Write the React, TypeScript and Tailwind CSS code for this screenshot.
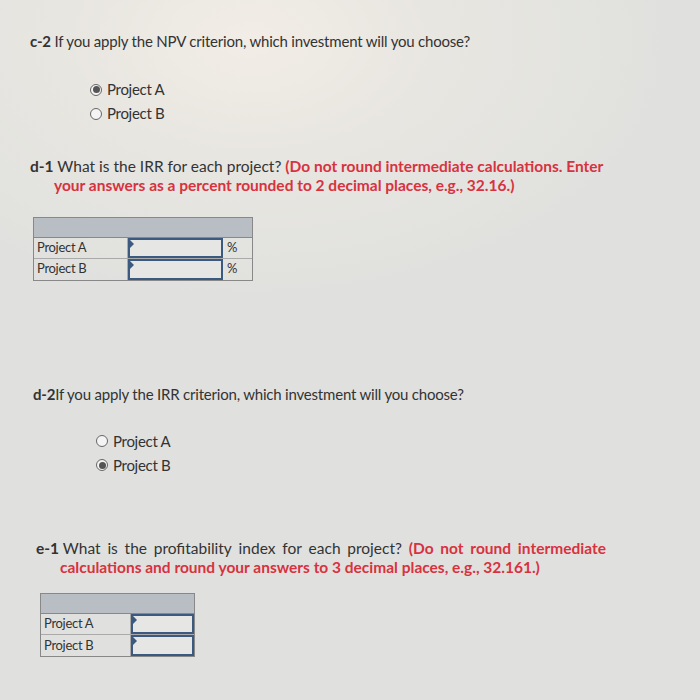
import React from "react";

function Radio({ checked, label }: { checked: boolean; label: string }) {
  return (
    <div className="flex items-center gap-[5px] h-[24px]">
      <span className="w-[12px] h-[12px] rounded-full border border-[#666] bg-[#f4f4f4] flex items-center justify-center">
        {checked && <span className="w-[7px] h-[7px] rounded-full bg-[#555]" />}
      </span>
      <span className="text-[15px] text-[#333] tracking-[-0.3px]">{label}</span>
    </div>
  );
}

function InputCell({ w }: { w: string }) {
  return (
    <div className={`relative ${w} h-full border-2 border-[#3c5a80] bg-[#e6e7e5]`}>
      <span className="absolute left-0 top-0 w-0 h-0 border-t-[4px] border-b-[4px] border-l-[4px] border-t-transparent border-b-transparent border-l-[#3c5a80]" />
    </div>
  );
}

export default function App() {
  return (
    <div
      className="w-[700px] h-[700px] overflow-hidden text-[#333] bg-[#e0e1de]"
      style={{
        fontFamily: "Lato, 'Open Sans', sans-serif",
        backgroundImage:
          "radial-gradient(ellipse 420px 260px at 250px 40px, #f2ede6 0%, #e8e6e1 45%, rgba(224,225,222,0) 100%)",
      }}
    >
      <div className="pt-[30px] pl-[30px]">
        <p className="text-[15px] tracking-[-0.2px]">
          <span className="font-bold">c-2</span> If you apply the NPV criterion, which investment will you choose?
        </p>
        <div className="pl-[60px] pt-[25px]">
          <Radio checked label="Project A" />
          <Radio checked={false} label="Project B" />
        </div>

        <div className="pt-[31px] text-[15.5px] leading-[19px] w-[640px]">
          <p>
            <span className="font-bold">d-1</span> What is the IRR for each project?{" "}
            <span className="text-[#d8323f] font-bold">
              (Do not round intermediate calculations. Enter
            </span>
          </p>
          <p className="pl-[24px] text-[#d8323f] font-bold">
            your answers as a percent rounded to 2 decimal places, e.g., 32.16.)
          </p>
        </div>

        <div className="ml-[3px] mt-[22px] w-[220px] border border-[#888] text-[13px] tracking-[-0.3px]">
          <div className="h-[20px] bg-[#b9bdc4] border-b border-[#888]" />
          <div className="flex h-[21px] border-b border-[#aaa]">
            <div className="w-[94px] pl-[3px] flex items-center border-r border-[#aaa]">Project A</div>
            <InputCell w="w-[95px]" />
            <div className="flex-1 flex items-center pl-[4px]">%</div>
          </div>
          <div className="flex h-[21px]">
            <div className="w-[94px] pl-[3px] flex items-center border-r border-[#aaa]">Project B</div>
            <InputCell w="w-[95px]" />
            <div className="flex-1 flex items-center pl-[4px]">%</div>
          </div>
        </div>

        <p className="pt-[102px] pl-[3px] text-[15px] tracking-[-0.2px]">
          <span className="font-bold">d-2</span>If you apply the IRR criterion, which investment will you choose?
        </p>
        <div className="pl-[66px] pt-[24px]">
          <Radio checked={false} label="Project A" />
          <Radio checked label="Project B" />
        </div>

        <div className="pt-[62px] pl-[6px] text-[15.5px] leading-[19px] w-[640px]">
          <p className="flex justify-between w-[570px]">
            <span><span className="font-bold">e-1</span> What</span><span>is</span><span>the</span><span>profitability</span><span>index</span><span>for</span><span>each</span><span>project?</span>
            <span className="text-[#d8323f] font-bold">(Do</span><span className="text-[#d8323f] font-bold">not</span><span className="text-[#d8323f] font-bold">round</span><span className="text-[#d8323f] font-bold">intermediate</span>
          </p>
          <p className="pl-[24px] text-[#d8323f] font-bold">
            calculations and round your answers to 3 decimal places, e.g., 32.161.)
          </p>
        </div>

        <div className="ml-[10px] mt-[16px] w-[155px] border border-[#888] text-[13px] tracking-[-0.3px]">
          <div className="h-[20px] bg-[#b9bdc4] border-b border-[#888]" />
          <div className="flex h-[21px] border-b border-[#aaa]">
            <div className="w-[90px] pl-[3px] flex items-center border-r border-[#aaa]">Project A</div>
            <InputCell w="flex-1" />
          </div>
          <div className="flex h-[21px]">
            <div className="w-[90px] pl-[3px] flex items-center border-r border-[#aaa]">Project B</div>
            <InputCell w="flex-1" />
          </div>
        </div>
      </div>
    </div>
  );
}
